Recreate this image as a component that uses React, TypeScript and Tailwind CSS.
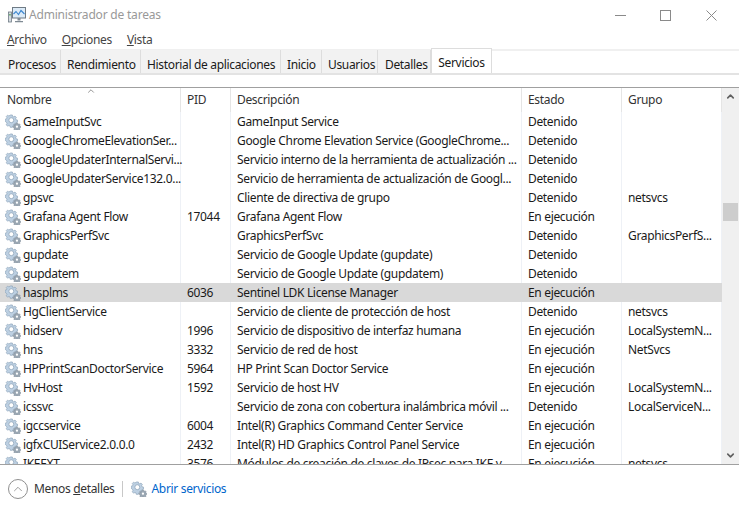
import { ChevronUp, ChevronDown } from "lucide-react"

const rows: [string, string, string, string, string][] = [
    ["GameInputSvc", "", "GameInput Service", "Detenido", ""],
    ["GoogleChromeElevationSer...", "", "Google Chrome Elevation Service (GoogleChrome...", "Detenido", ""],
    ["GoogleUpdaterInternalServi...", "", "Servicio interno de la herramienta de actualización ...", "Detenido", ""],
    ["GoogleUpdaterService132.0...", "", "Servicio de herramienta de actualización de Googl...", "Detenido", ""],
    ["gpsvc", "", "Cliente de directiva de grupo", "Detenido", "netsvcs"],
    ["Grafana Agent Flow", "17044", "Grafana Agent Flow", "En ejecución", ""],
    ["GraphicsPerfSvc", "", "GraphicsPerfSvc", "Detenido", "GraphicsPerfS..."],
    ["gupdate", "", "Servicio de Google Update (gupdate)", "Detenido", ""],
    ["gupdatem", "", "Servicio de Google Update (gupdatem)", "Detenido", ""],
    ["hasplms", "6036", "Sentinel LDK License Manager", "En ejecución", ""],
    ["HgClientService", "", "Servicio de cliente de protección de host", "Detenido", "netsvcs"],
    ["hidserv", "1996", "Servicio de dispositivo de interfaz humana", "En ejecución", "LocalSystemN..."],
    ["hns", "3332", "Servicio de red de host", "En ejecución", "NetSvcs"],
    ["HPPrintScanDoctorService", "5964", "HP Print Scan Doctor Service", "En ejecución", ""],
    ["HvHost", "1592", "Servicio de host HV", "En ejecución", "LocalSystemN..."],
    ["icssvc", "", "Servicio de zona con cobertura inalámbrica móvil ...", "Detenido", "LocalServiceN..."],
    ["igccservice", "6004", "Intel(R) Graphics Command Center Service", "En ejecución", ""],
    ["igfxCUIService2.0.0.0", "2432", "Intel(R) HD Graphics Control Panel Service", "En ejecución", ""],
    ["IKEEXT", "3576", "Módulos de creación de claves de IPsec para IKE y...", "En ejecución", "netsvcs"],
]

const tabs = [
    { label: "Procesos", cls: "w-[61px] pl-[8px]" },
    { label: "Rendimiento", cls: "w-[80px] pl-[6px]" },
    { label: "Historial de aplicaciones", cls: "w-[140px] pl-[6px]" },
    { label: "Inicio", cls: "w-[41px] pl-[6px]" },
    { label: "Usuarios", cls: "w-[56px] pl-[6px]" },
    { label: "Detalles", cls: "w-[53px] pl-[7px]" },
]

function Gear() {
    return (
        <svg width="16" height="16" viewBox="0 0 17 17" className="shrink-0">
            <path
                d="M5.6 1h2.2l.3 1.5 1.2.5 1.3-.8 1.5 1.5-.8 1.3.5 1.2 1.5.3v2.2l-1.5.3-.5 1.2.8 1.3-1.5 1.5-1.3-.8-1.2.5-.3 1.5H5.6l-.3-1.5-1.2-.5-1.3.8-1.5-1.5.8-1.3-.5-1.2L.1 7.7V5.5l1.5-.3.5-1.2-.8-1.3 1.5-1.5 1.3.8 1.2-.5z"
                fill="#bdd0e2"
                stroke="#8199b0"
                strokeWidth="0.6"
            />
            <circle cx="6.7" cy="6.6" r="2.6" fill="#ffffff" stroke="#8199b0" strokeWidth="0.7" />
            <path
                d="M12 9.6h1.4l.2.9.7.3.8-.5 1 1-.5.8.3.7.8.2v1.4l-.8.2-.3.7.5.8-1 1-.8-.5-.7.3-.2.6H12l-.2-.6-.7-.3-.8.5-1-1 .5-.8-.3-.7-.8-.2V13l.8-.2.3-.7-.5-.8 1-1 .8.5.7-.3z"
                fill="#9aa7b3"
                stroke="#6d7c8a"
                strokeWidth="0.4"
            />
            <circle cx="12.7" cy="13.5" r="1.2" fill="#ffffff" />
        </svg>
    )
}

function AppIcon() {
    return (
        <svg width="18" height="18" viewBox="0 0 18 18" className="shrink-0">
            <rect x="0.5" y="6" width="3" height="10" fill="#d5dbe0" stroke="#6f7b85" strokeWidth="0.8" />
            <rect x="1.2" y="8" width="1.5" height="1.5" fill="#58a85c" />
            <rect x="4.5" y="1.5" width="13" height="10.5" fill="#dcebf8" stroke="#6f7b85" />
            <path d="M5.5 8 8 5.5l2.5 3 2.5-4 3.5 3.5" fill="none" stroke="#3b86cf" strokeWidth="1.1" />
            <path d="M9.5 12h3v2.5h-3zM7 15h8v1.2H7z" fill="#7f8a94" />
        </svg>
    )
}

function WindowButtons() {
    return (
        <div className="flex items-center">
            <svg width="11" height="11" viewBox="0 0 11 11" className="mr-[34px]">
                <path d="M0 5.5h11" stroke="#8a8a8a" />
            </svg>
            <svg width="11" height="11" viewBox="0 0 11 11" className="mr-[35px]">
                <rect x="0.5" y="0.5" width="10" height="10" fill="none" stroke="#8a8a8a" />
            </svg>
            <svg width="11" height="11" viewBox="0 0 11 11" className="mr-[22px]">
                <path d="M.5.5l10 10M10.5.5l-10 10" stroke="#8a8a8a" />
            </svg>
        </div>
    )
}

export default function App() {
    return (
        <div className="flex h-[512px] w-[739px] flex-col overflow-hidden bg-white font-['Noto_Sans','Open_Sans',sans-serif] text-[12px] tracking-[-0.33px] text-[#1a1a1a]">
            {/* title bar */}
            <div className="flex h-[30px] items-center justify-between pl-[8px]">
                <div className="flex items-center gap-[3px] text-[#999999]">
                    <AppIcon />
                    <span className="tracking-[-0.2px]">Administrador de tareas</span>
                </div>
                <WindowButtons />
            </div>

            {/* menu */}
            <div className="flex h-[19px] items-center gap-[15px] pl-[7px] pt-[1px] text-[#444444]">
                <span><u>A</u>rchivo</span>
                <span><u>O</u>pciones</span>
                <span><u>V</u>ista</span>
            </div>

            {/* tabs */}
            <div className="flex h-[26px] items-end border-t-2 border-[#f0f0f0]">
                <div className="flex h-[25px] w-full border-b-2 border-[#e3e3e3]">
                    {tabs.map((t) => (
                        <div
                            key={t.label}
                            className={`flex h-[23px] items-center whitespace-nowrap border-r border-[#dddddd] bg-[#f2f2f2] pt-[6px] ${t.cls}`}
                        >
                            {t.label}
                        </div>
                    ))}
                    <div className="z-10 -mt-[2px] flex h-[25px] w-[61px] items-start justify-center border-x border-t border-[#dddddd] bg-white pt-[5px]">
                        Servicios
                    </div>
                </div>
            </div>

            <div className="h-[12px] shrink-0" />

            {/* table */}
            <div className="flex min-h-0 flex-1 border-t border-b border-[#a0a0a0]">
                <div className="w-[722px] overflow-hidden">
                    <div className="relative grid h-[24px] grid-cols-[181px_50px_291px_100px_100px] text-[#333333]">
                        <ChevronUp className="absolute left-[86px] -top-[2px] size-[10px] text-[#808080]" />
                        {["Nombre", "PID", "Descripción", "Estado", "Grupo"].map((h, i) => (
                            <div
                                key={h}
                                className={`flex items-end border-r border-[#e5e5e5] pb-[3px] ${i === 0 ? "pl-[7px]" : "pl-[6px]"}`}
                            >
                                {h}
                            </div>
                        ))}
                    </div>
                    {rows.map((r) => {
                        const sel = r[0] === "hasplms"
                        const rowBg = sel ? "bg-[#d9d9d9]" : "bg-white"
                        const line = sel ? "border-[#d9d9d9]" : "border-[#eef1f6]"
                        return (
                            <div
                                key={r[0]}
                                className={`grid h-[19px] grid-cols-[181px_50px_291px_100px_100px] items-stretch ${rowBg}`}
                            >
                                <div className={`flex items-center gap-[2px] whitespace-nowrap border-r pl-[5px] ${line}`}>
                                    <Gear />
                                    <span className="pt-[1px]">{r[0]}</span>
                                </div>
                                <div className={`flex items-center border-r pl-[6px] pt-[1px] ${line}`}>{r[1]}</div>
                                <div className={`flex items-center whitespace-nowrap border-r pl-[6px] pt-[1px] ${line}`}>{r[2]}</div>
                                <div className={`flex items-center border-r pl-[6px] pt-[1px] ${line}`}>{r[3]}</div>
                                <div className={`flex items-center whitespace-nowrap border-r pl-[6px] pt-[1px] ${line}`}>{r[4]}</div>
                            </div>
                        )
                    })}
                </div>

                {/* scrollbar */}
                <div className="flex flex-1 flex-col items-center bg-[#f0f0f0]">
                    <div className="flex h-[17px] items-center justify-center">
                        <ChevronUp className="size-[11px] text-[#606060]" strokeWidth={3.5} />
                    </div>
                    <div className="mt-[98px] h-[18px] w-full border-x border-[#f0f0f0] bg-[#cdcdcd]" />
                    <div className="flex-1" />
                    <div className="flex h-[17px] items-center justify-center">
                        <ChevronDown className="size-[11px] text-[#606060]" strokeWidth={3.5} />
                    </div>
                </div>
            </div>

            {/* footer */}
            <div className="flex h-[47px] shrink-0 items-center pl-[8px]">
                <div className="flex size-[20px] items-center justify-center rounded-full border border-[#8f8f8f]">
                    <ChevronUp className="size-[14px] text-[#8f8f8f]" strokeWidth={1.5} />
                </div>
                <span className="ml-[6px] text-[#333333]">
                    Menos <u>d</u>etalles
                </span>
                <div className="ml-[7px] mr-[8px] h-[16px] w-px bg-[#c8c8c8]" />
                <Gear />
                <span className="ml-[5px] text-[#0066cc]">Abrir servicios</span>
            </div>
        </div>
    )
}
